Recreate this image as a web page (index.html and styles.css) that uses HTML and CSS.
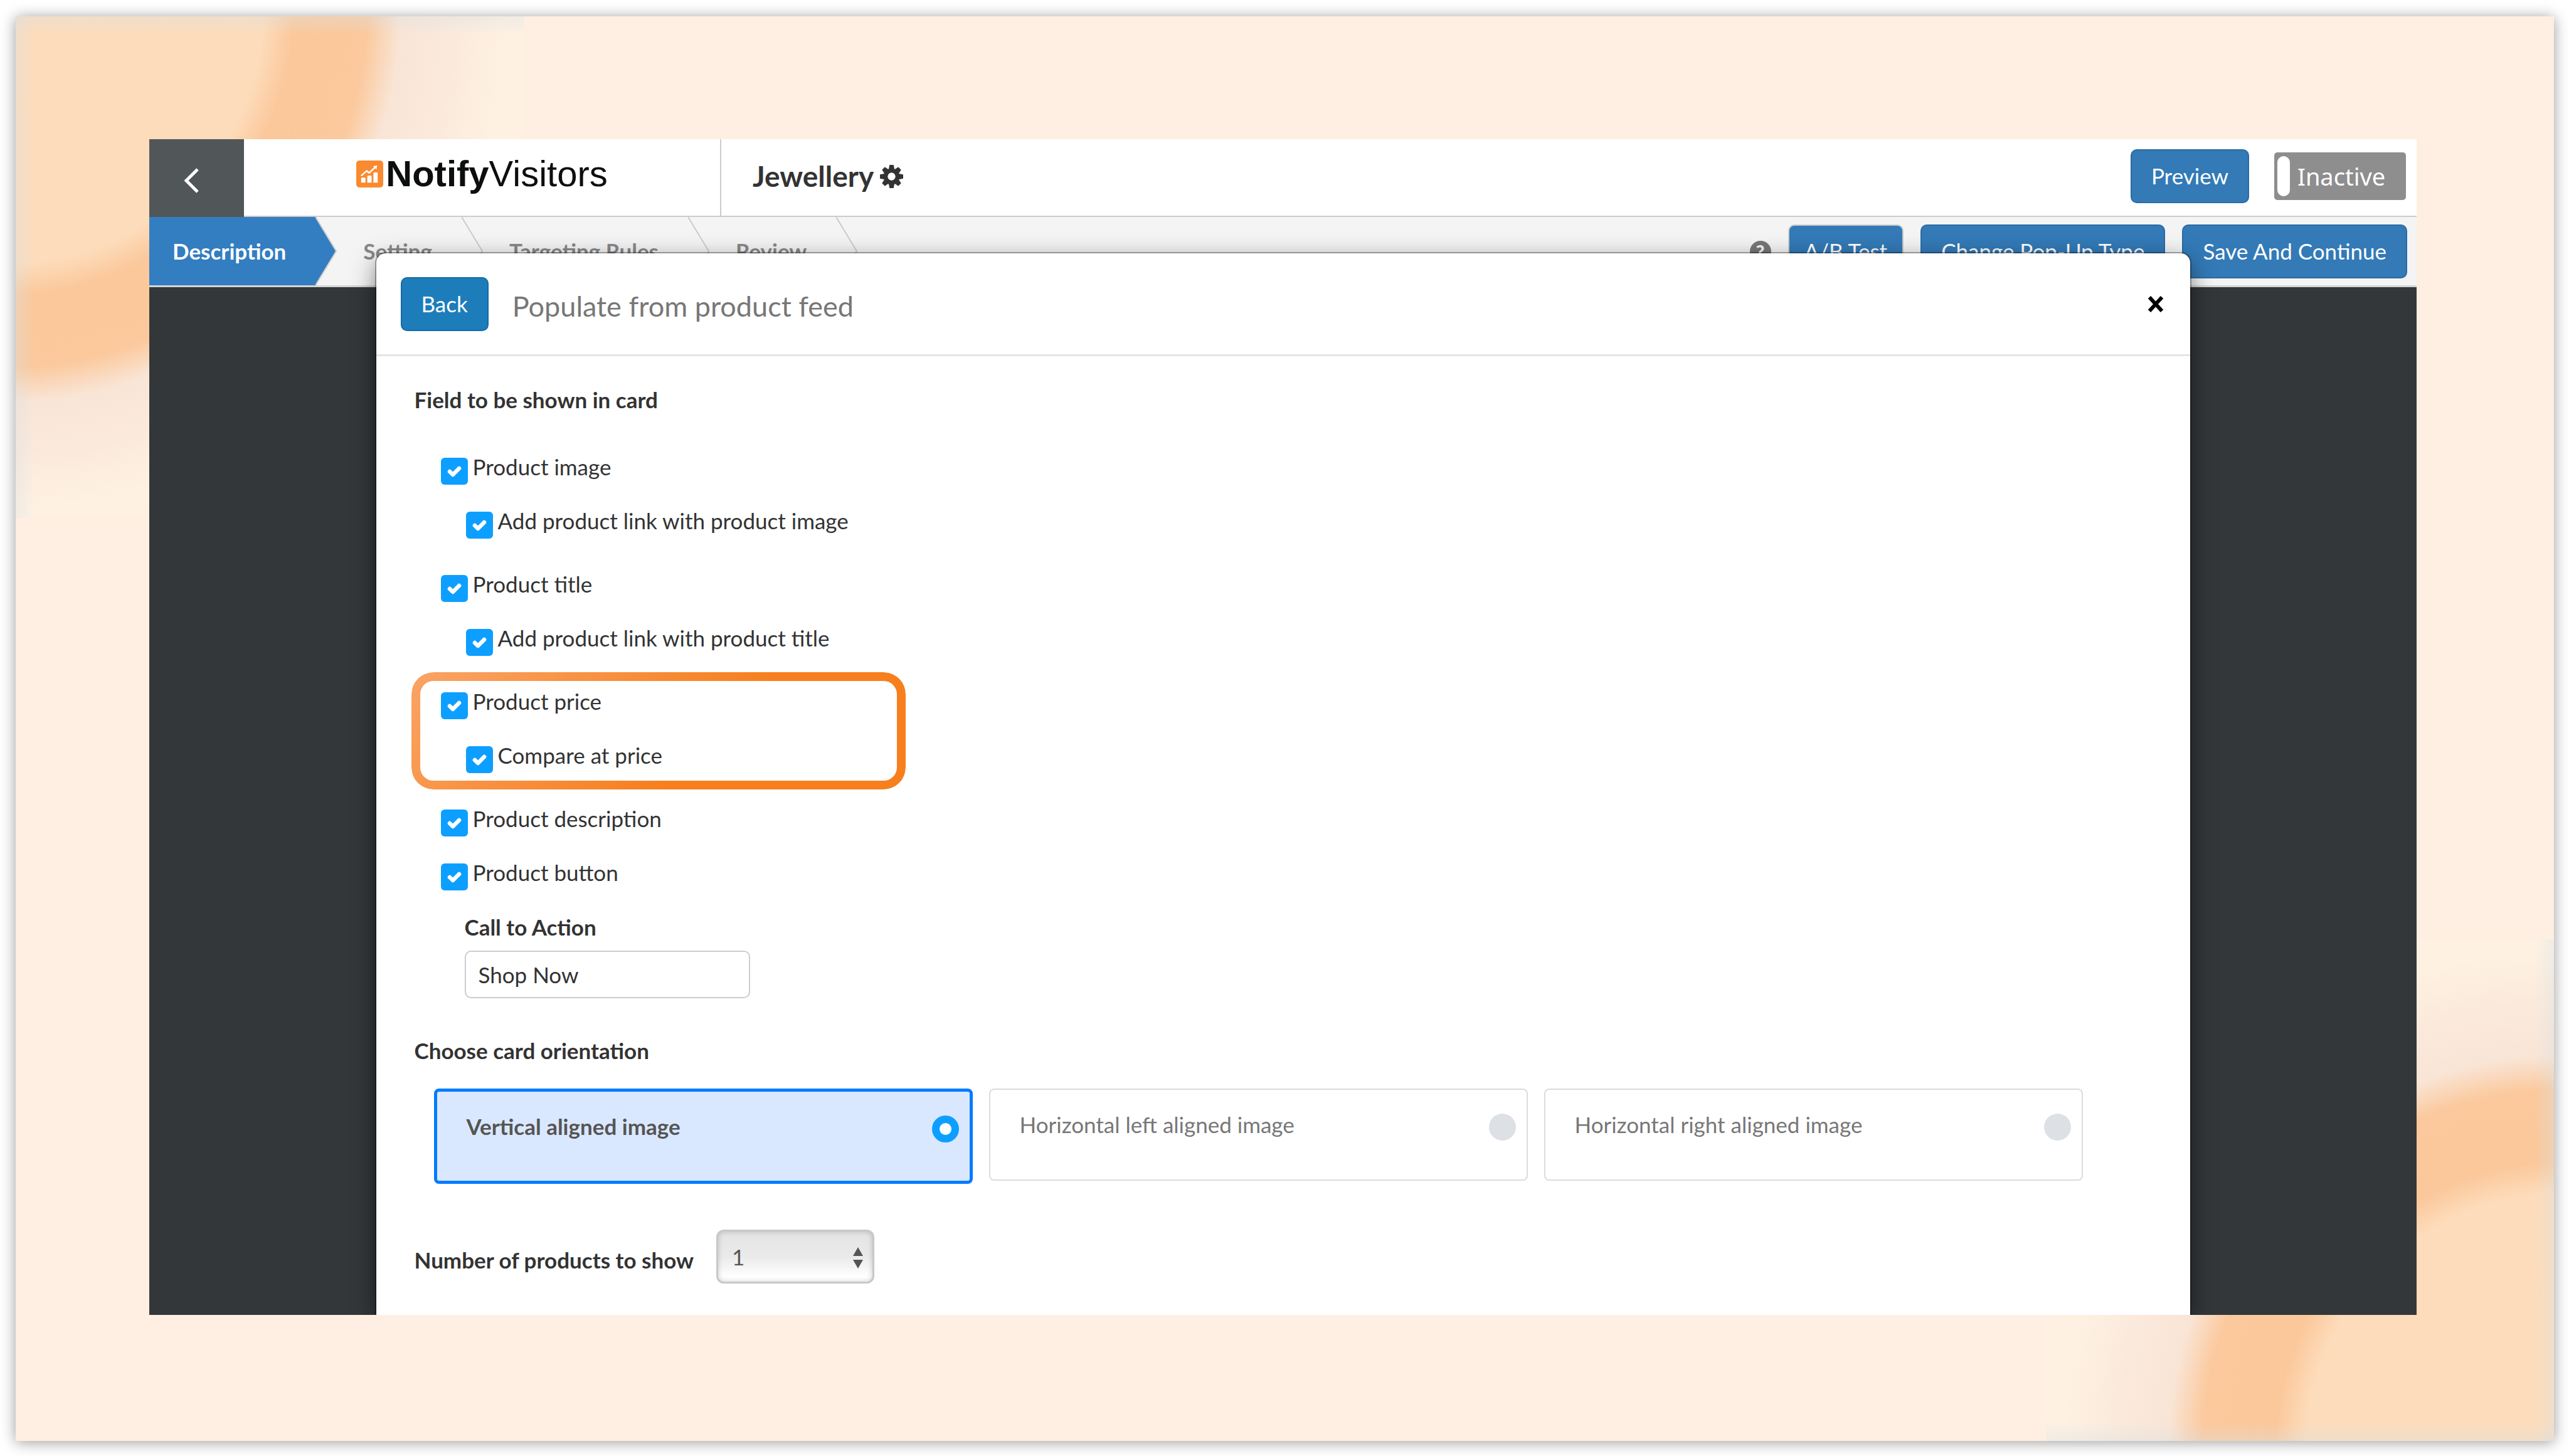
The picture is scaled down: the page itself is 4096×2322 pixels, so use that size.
FILE: index.html
```
<!DOCTYPE html>
<html lang="en">
<head>
    <meta charset="UTF-8">
    <meta name="viewport" content="width=device-width, initial-scale=1.0">
    <title>Jewellery - NotifyVisitors</title>
    <link rel="stylesheet" href="styles.css">
</head>
<body>
    <div class="canvas">
        <div class="app">
            <header class="topbar">
                <button class="back-arrow" type="button" aria-label="Go back">
                    <svg width="26" height="42" viewBox="0 0 26 42"><path d="M22 3 L4 21 L22 39" fill="none" stroke="#fff" stroke-width="5"/></svg>
                </button>
                <a class="logo" href="#">
                    <svg class="logo-icon" viewBox="0 0 44 44">
                        <rect width="44" height="44" rx="5" fill="#f98a2f"/>
                        <path d="M8 36v-6.500q0-1.500 1.500-1.500h4q1.500 0 1.500 1.500V36zM18 36V26q0-1.500 1.500-1.500h4q1.500 0 1.500 1.500v10zM28 36V21q0-1.500 1.500-1.500h4q1.500 0 1.500 1.500v15z" fill="#fff"/>
                        <path d="M8 25 L17 17 L21 20 L32 10" fill="none" stroke="#fff" stroke-width="2.500"/>
                        <path d="M27.500 9.500 L34 8 L33 14.500z" fill="#fff"/>
                    </svg>
                    <span class="logo-text"><b>Notify</b>Visitors</span>
                </a>
                <div class="campaign">
                    <h1>Jewellery</h1>
                    <svg class="gear" viewBox="-20 -20 40 40">
                        <g fill="#333">
                            <path id="tooth" d="M-5 -12 L-3.500 -20 L3.500 -20 L5 -12 L5 12 L3.500 20 L-3.500 20 L-5 12z" mask="url(#hole)"/>
                            <use href="#tooth" transform="rotate(45)"/>
                            <use href="#tooth" transform="rotate(90)"/>
                            <use href="#tooth" transform="rotate(135)"/>
                        </g>
                        <mask id="hole"><rect x="-20" y="-20" width="40" height="40" fill="#fff"/><circle r="7" fill="#000"/></mask>
                        <circle r="10.500" fill="none" stroke="#333" stroke-width="7"/>
                    </svg>
                </div>
                <div class="top-actions">
                    <button class="btn" type="button">Preview</button>
                    <button class="status" type="button"><span class="knob"></span>Inactive</button>
                </div>
            </header>

            <nav class="steps">
                <button class="step active" type="button">Description</button>
                <svg class="chevron" viewBox="0 0 34 109" preserveAspectRatio="none"><path d="M0 0 L33 54.500 L0 109z" fill="#337dc1"/><path d="M0 0 L33 54.500 L0 109" fill="none" stroke="#ccc" stroke-width="2"/></svg>
                <button class="step" type="button">Setting</button>
                <svg class="chevron" viewBox="0 0 34 109" preserveAspectRatio="none"><path d="M0 0 L33 54.500 L0 109" fill="none" stroke="#ccc" stroke-width="2"/></svg>
                <button class="step" type="button">Targeting Rules</button>
                <svg class="chevron" viewBox="0 0 34 109" preserveAspectRatio="none"><path d="M0 0 L33 54.500 L0 109" fill="none" stroke="#ccc" stroke-width="2"/></svg>
                <button class="step" type="button">Review</button>
                <svg class="chevron" viewBox="0 0 34 109" preserveAspectRatio="none"><path d="M0 0 L33 54.500 L0 109" fill="none" stroke="#ccc" stroke-width="2"/></svg>
                <div class="step-actions">
                    <span class="help">?</span>
                    <button class="btn outlined" type="button">A/B Test</button>
                    <button class="btn" type="button">Change Pop-Up Type</button>
                    <button class="btn" type="button">Save And Continue</button>
                </div>
            </nav>

            <!-- product feed popup -->
            <section class="modal">
                <div class="modal-header">
                    <button class="btn btn-back" type="button">Back</button>
                    <h2>Populate from product feed</h2>
                    <button class="close" type="button" aria-label="Close">
                        <svg width="26" height="26" viewBox="0 0 26 26"><path d="M3 2 L23 24 M23 2 L3 24" stroke="#000" stroke-width="6"/></svg>
                    </button>
                </div>
                <form class="modal-body">
                    <h3>Field to be shown in card</h3>
                    <div class="fields">
                        <div class="group">
                            <label class="check"><input type="checkbox" checked><span>Product image</span></label>
                            <label class="check sub"><input type="checkbox" checked><span>Add product link with product image</span></label>
                        </div>
                        <div class="group">
                            <label class="check"><input type="checkbox" checked><span>Product title</span></label>
                            <label class="check sub"><input type="checkbox" checked><span>Add product link with product title</span></label>
                        </div>
                        <div class="group highlight">
                            <label class="check"><input type="checkbox" checked><span>Product price</span></label>
                            <label class="check sub"><input type="checkbox" checked><span>Compare at price</span></label>
                        </div>
                        <div class="group">
                            <label class="check"><input type="checkbox" checked><span>Product description</span></label>
                            <label class="check"><input type="checkbox" checked><span>Product button</span></label>
                            <div class="cta">
                                <label for="cta">Call to Action</label>
                                <input type="text" id="cta" name="cta" value="Shop Now">
                            </div>
                        </div>
                    </div>

                    <h3>Choose card orientation</h3>
                    <div class="cards">
                        <label class="card selected"><span>Vertical aligned image</span><input type="radio" name="orientation" checked></label>
                        <label class="card"><span>Horizontal left aligned image</span><input type="radio" name="orientation"></label>
                        <label class="card"><span>Horizontal right aligned image</span><input type="radio" name="orientation"></label>
                    </div>

                    <div class="count">
                        <label for="count">Number of products to show</label>
                        <div class="select-wrap">
                            <select id="count" name="count">
                                <option>1</option>
                                <option>2</option>
                                <option>3</option>
                            </select>
                            <svg class="arrows" viewBox="0 0 16 34"><path d="M0 14 L8 0 L16 14z M0 20 L16 20 L8 34z" fill="#555"/></svg>
                        </div>
                    </div>
                </form>
            </section>
        </div>
    </div>
</body>
</html>
```

FILE: styles.css
```
*, *::before {
    box-sizing: border-box;
}

body {
    margin: 0;
    padding: 26px 24px 24px 25px;
    height: 100vh;
    background-color: #fff;
    font-family: Lato, "Liberation Sans", sans-serif;
    font-size: 35px;
    line-height: 50px;
    color: #333;
}

button, input, select {
    font: inherit;
    color: inherit;
    margin: 0;
}

button {
    border: none;
    padding: 0;
    background: none;
    cursor: pointer;
}

h1, h2, h3 {
    margin: 0;
}

svg {
    display: block;
    flex: none;
}

.canvas {
    height: 100%;
    padding: 196px 219px 201px 213px;
    display: flex;
    box-shadow: 0 2px 22px rgba(0, 0, 0, 0.4);
    background-color: #feefe2;
    background-image:
        linear-gradient(to right, rgba(215, 225, 230, 0.35), rgba(215, 225, 230, 0)),
        linear-gradient(to bottom, rgba(215, 225, 230, 0.35), rgba(215, 225, 230, 0)),
        linear-gradient(to left, rgba(215, 225, 230, 0.35), rgba(215, 225, 230, 0)),
        linear-gradient(to top, rgba(215, 225, 230, 0.35), rgba(215, 225, 230, 0)),
        radial-gradient(circle at -15px -15px, #fddcbb 410px, #fbc89b 460px, #fbc99d 575px, #f9e5d6 630px, #fae8da 690px, #fef1e2 800px, #feefe2 1000px),
        radial-gradient(circle at 825px 815px, #fddcbb 410px, #fbc89b 460px, #fbc99d 575px, #f9e5d6 630px, #fae8da 690px, #fef1e2 800px, #feefe2 1000px);
    background-repeat: no-repeat;
    background-size: 30px 800px, 810px 30px, 30px 800px, 810px 30px, 810px 800px, 810px 800px;
    background-position: left top, left top, right bottom, right bottom, left top, right bottom;
}

.app {
    position: relative;
    flex: 1;
    min-width: 0;
    overflow: hidden;
    background-color: #333739;
}

/* top bar */
.topbar {
    display: flex;
    height: 124px;
    background-color: #fff;
}

.back-arrow {
    width: 151px;
    padding: 8px 16px 0 0;
    display: flex;
    align-items: center;
    justify-content: center;
    background-color: #515658;
}

.logo {
    width: 759px;
    padding-bottom: 12px;
    display: flex;
    align-items: center;
    justify-content: center;
    gap: 4px;
    color: #0d0f0f;
    text-decoration: none;
    border-bottom: 2px solid #ccc;
}

.logo-icon {
    width: 43px;
    height: 43px;
}

.logo-text {
    font-family: "Liberation Sans", Arial, sans-serif;
    font-size: 58px;
}

.campaign {
    flex: 1;
    padding: 0 0 4px 50px;
    display: flex;
    align-items: center;
    gap: 10px;
    border-left: 2px solid #ccc;
    border-bottom: 2px solid #ccc;
}

.campaign h1 {
    font-size: 46px;
}

.gear {
    width: 37px;
    height: 37px;
}

.top-actions {
    display: flex;
    align-items: center;
    gap: 40px;
    padding: 0 17px 4px 0;
    border-bottom: 2px solid #ccc;
}

.btn {
    height: 86px;
    padding: 0 31px 2px;
    border: 2px solid #2b6ba5;
    border-radius: 10px;
    background-color: #337ab7;
    color: #fff;
    white-space: nowrap;
}

.btn.outlined {
    padding: 0 24px 2px;
    border-color: #ccc;
}

.status {
    width: 210px;
    height: 76px;
    padding: 0 5px;
    display: flex;
    align-items: center;
    gap: 12px;
    border-radius: 5px;
    background-color: #8e8e8e;
    color: #fff;
    font-family: "Noto Sans", sans-serif;
    font-size: 38px;
}

.knob {
    width: 20px;
    height: 64px;
    border-radius: 10px;
    background-color: #fff;
}

/* step tabs */
.steps {
    display: flex;
    height: 112px;
    background-color: #f4f4f4;
    border-bottom: 3px solid #d5d5d5;
}

.step {
    padding: 0 47px 2px 42px;
    font-weight: bold;
    color: #888;
    white-space: nowrap;
}

.step.active {
    padding-left: 37px;
    background-color: #337dc1;
    color: #fff;
}

.chevron {
    width: 34px;
    height: 109px;
}

.step-actions {
    flex: 1;
    display: flex;
    align-items: center;
    justify-content: flex-end;
    gap: 27px;
    padding-right: 15px;
}

.help {
    width: 34px;
    height: 34px;
    border-radius: 50%;
    background-color: #777;
    color: #f4f4f4;
    font-size: 30px;
    font-weight: 900;
    line-height: 34px;
    text-align: center;
}

/* popup */
.modal {
    position: absolute;
    top: 182px;
    bottom: 0;
    left: 10%;
    width: 80%;
    background-color: #fff;
    border-radius: 15px 15px 0 0;
    box-shadow: 0 0 0 2px rgba(0, 0, 0, 0.3), 0 12px 38px rgba(0, 0, 0, 0.5);
}

.modal-header {
    display: flex;
    align-items: center;
    height: 164px;
    padding: 0 42px 0 39px;
    border-bottom: 3px solid #e5e5e5;
}

.btn-back {
    background-color: #1d7dbb;
    border-color: #146ba4;
}

.modal-header h2 {
    flex: 1;
    padding-top: 6px;
    margin-left: 38px;
    font-size: 45px;
    font-weight: normal;
    color: #777;
}

.modal-body {
    padding: 44px 171px 0 61px;
}

.modal-body h3 {
    font-size: 35px;
}

.fields {
    margin-top: 68px;
    padding-left: 42px;
}

.group {
    display: flex;
    flex-direction: column;
    gap: 43px;
    margin-bottom: 58px;
    position: relative;
}

.check {
    display: flex;
    align-items: center;
    gap: 8px;
    height: 43px;
}

.check.sub {
    margin-left: 40px;
}

.check span {
    padding-bottom: 16px;
}

.check input {
    appearance: none;
    width: 43px;
    height: 43px;
    border-radius: 6px;
    background-color: #0d9fff;
    background-image: url("data:image/svg+xml,%3Csvg xmlns='http://www.w3.org/2000/svg' viewBox='0 0 43 43'%3E%3Cpath d='M14 22 L19 27 L29 17' fill='none' stroke='%23fff' stroke-width='6.500' stroke-linecap='round' stroke-linejoin='round'/%3E%3C/svg%3E");
}

/* orange frame around the price rows */
.highlight::before {
    content: "";
    position: absolute;
    top: -32px;
    left: -47px;
    width: 788px;
    height: 187px;
    padding: 14px;
    border-radius: 35px;
    background: linear-gradient(135deg, #f9a465, #f77f1e 60%);
    mask: linear-gradient(#000 0 0) content-box exclude, linear-gradient(#000 0 0);
    pointer-events: none;
}

.cta {
    display: flex;
    flex-direction: column;
    gap: 13px;
    margin: -10px 0 0 38px;
    width: 455px;
}

.cta label, .count label {
    font-weight: bold;
}

.cta input {
    height: 76px;
    padding: 0 20px;
    border: 2px solid #ccc;
    border-radius: 10px;
    background-color: #fff;
}

.cards {
    display: grid;
    grid-template-columns: repeat(3, 1fr);
    align-items: start;
    gap: 26px;
    margin: 36px 0 0 31px;
}

.card {
    display: flex;
    align-items: flex-start;
    justify-content: space-between;
    height: 147px;
    padding: 30px 17px 0 47px;
    border: 2px solid #dcdcdc;
    border-radius: 8px;
    color: #777;
}

.card.selected {
    height: 152px;
    border: 5px solid #007bff;
    background-color: #dae8ff;
    color: #555;
    font-weight: bold;
}

.card input {
    appearance: none;
    width: 43px;
    height: 43px;
    margin: 8px 0 0;
    border-radius: 50%;
    background-color: #dde1e6;
}

.card input:checked {
    border: 12px solid #0d9fff;
    background-color: #fff;
}

.count {
    display: flex;
    align-items: center;
    gap: 36px;
    margin-top: 73px;
}

.count label {
    padding-top: 10px;
}

.select-wrap {
    position: relative;
}

.select-wrap select {
    appearance: none;
    display: block;
    width: 252px;
    height: 86px;
    padding: 0 22px;
    border: 3px solid #c8c8c8;
    border-radius: 12px;
    background: linear-gradient(#e4e4e4, #eaeaea 50%, #fff 90%);
    box-shadow: inset 0 0 8px rgba(0, 0, 0, 0.2);
    color: #555;
}

.arrows {
    position: absolute;
    top: 28px;
    right: 18px;
    width: 16px;
    height: 34px;
    pointer-events: none;
}
```
